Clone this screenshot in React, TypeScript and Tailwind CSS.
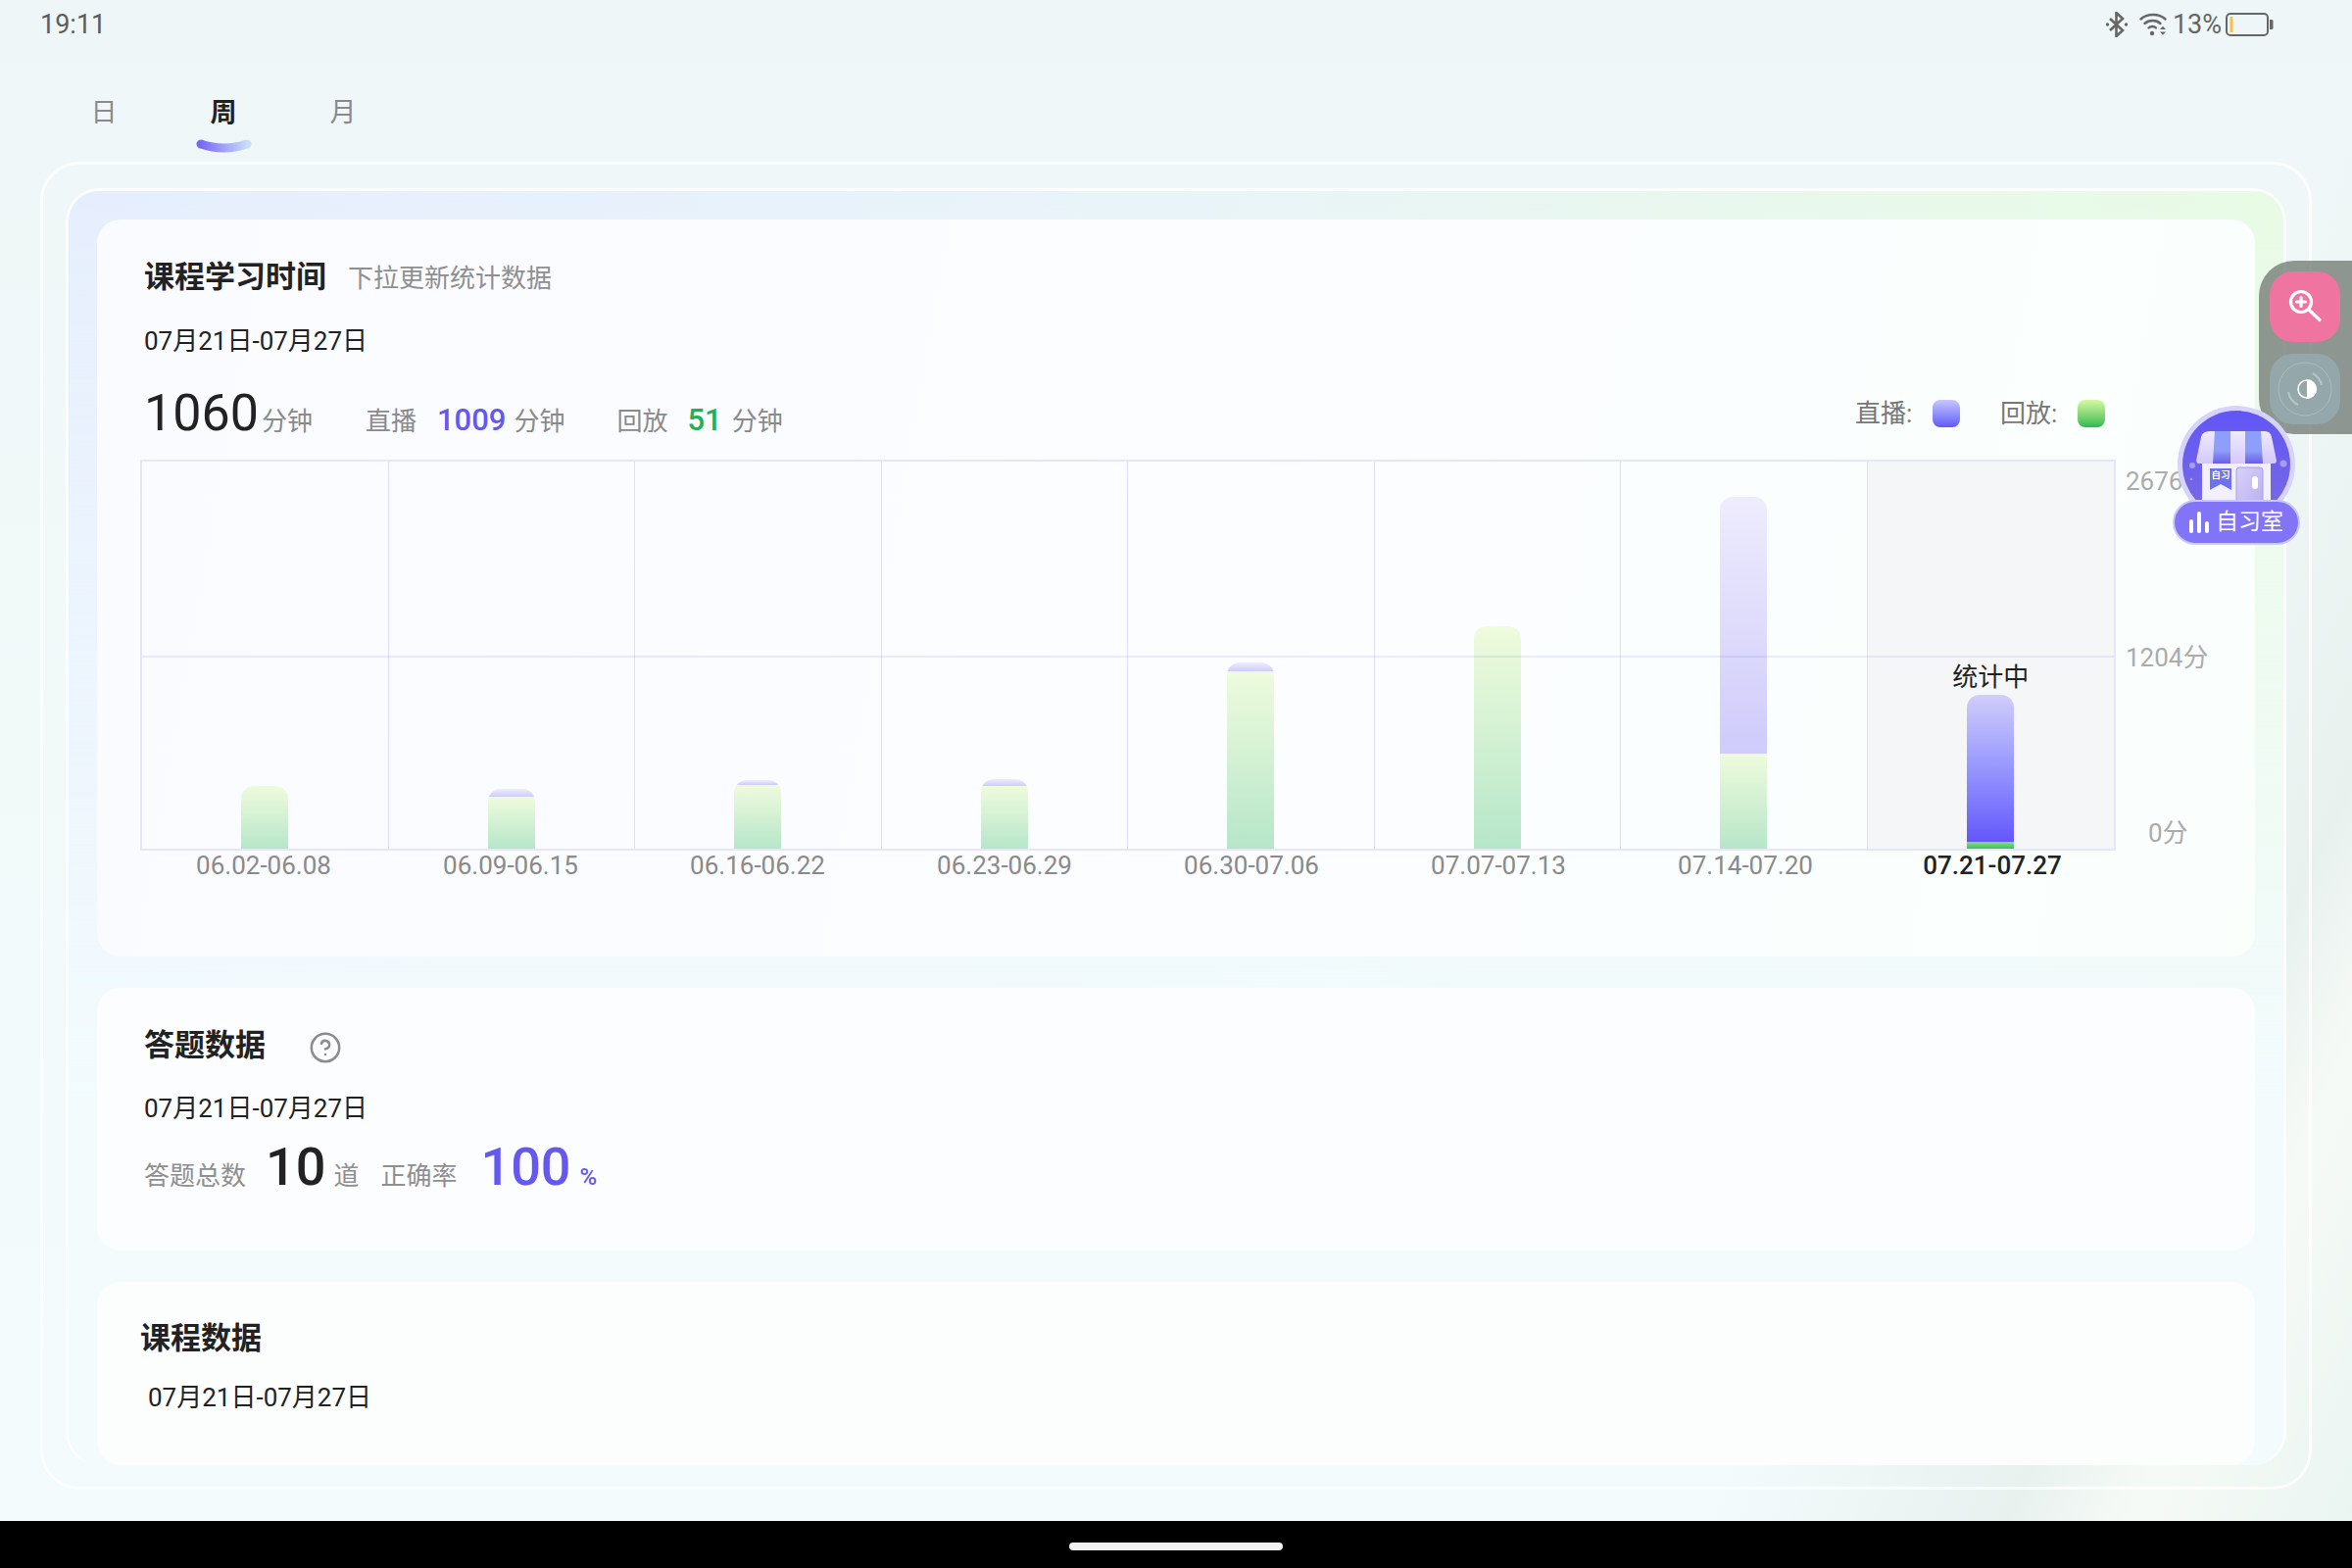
import { CircleHelp } from "lucide-react";

const weeks = [
  { label: "06.02-06.08", live: 0, replay: 64 },
  { label: "06.09-06.15", live: 8, replay: 53 },
  { label: "06.16-06.22", live: 5, replay: 65 },
  { label: "06.23-06.29", live: 7, replay: 64 },
  { label: "06.30-07.06", live: 9, replay: 181 },
  { label: "07.07-07.13", live: 0, replay: 227 },
  { label: "07.14-07.20", live: 262, replay: 97 },
];

function Bar({ live, replay }: { live: number; replay: number }) {
  return (
    <div className="w-[48px] flex flex-col overflow-hidden rounded-t-[13px]">
      {live > 0 && <div className="bg-gradient-to-b from-[#eeecfc] to-[#cfcbfb]" style={{ height: live }} />}
      <div className="bg-gradient-to-b from-[#effbdd] to-[#b6e6c9]" style={{ height: replay }} />
    </div>
  );
}

function BluetoothIcon() {
  return (
    <svg width="24" height="26" viewBox="0 0 24 26" fill="none" stroke="#666" strokeWidth="2.6">
      <path d="M5 7 L18 19 L11.5 25 V1 L18 7 L5 19" />
      <circle cx="2.5" cy="13" r="1.7" fill="#666" stroke="none" />
      <circle cx="21.5" cy="13" r="1.7" fill="#666" stroke="none" />
    </svg>
  );
}

function WifiIcon() {
  return (
    <svg width="28" height="24" viewBox="0 0 28 24" fill="none" stroke="#666" strokeWidth="2.4" strokeLinecap="round">
      <path d="M1.5 6.5 C8 0.5 20 0.5 26.5 6.5" />
      <path d="M5.5 11 C10 7 17 7 21.5 11" />
      <path d="M9.5 15.5 C11.5 13.5 15 13.5 17 15.5" />
      <circle cx="13" cy="21" r="2.2" fill="#666" stroke="none" />
      <path d="M21 17 L24 13.8 L27 17 Z" fill="#666" stroke="none" />
      <path d="M21 19.5 L24 22.7 L27 19.5 Z" fill="#666" stroke="none" />
    </svg>
  );
}

function BatteryIcon() {
  return (
    <svg width="49" height="24" viewBox="0 0 49 24" fill="none">
      <rect x="1" y="1" width="42" height="22" rx="4" stroke="#666" strokeWidth="2" />
      <rect x="4.5" y="4" width="3" height="16" fill="#f5c04a" />
      <path d="M45 7 H47 Q48.5 7 48.5 8.5 V15.5 Q48.5 17 47 17 H45 Z" fill="#666" />
    </svg>
  );
}

function TabMark() {
  return (
    <svg width="57" height="14" viewBox="0 0 57 14" fill="none" className="block">
      <defs>
        <linearGradient id="tabmark" x1="0" y1="0" x2="1" y2="0">
          <stop offset="0" stopColor="#7769f6" />
          <stop offset="1" stopColor="#c9dcf8" />
        </linearGradient>
      </defs>
      <path d="M5 5 Q28.5 13 52 5" stroke="url(#tabmark)" strokeWidth="9" strokeLinecap="round" />
    </svg>
  );
}

function DateLine({ className }: { className: string }) {
  return <div className={`text-[26px] leading-[30px] text-[#222] ${className}`}>07月21日-07月27日</div>;
}

function StoreBadge() {
  return (
    <svg width="120" height="100" viewBox="0 0 120 100" fill="none" className="block">
      <defs>
        <linearGradient id="disc" x1="0" y1="0" x2="0" y2="1">
          <stop offset="0" stopColor="#6156f6" />
          <stop offset="1" stopColor="#7a6be2" />
        </linearGradient>
        <linearGradient id="awnW" x1="0" y1="0" x2="0" y2="1">
          <stop offset="0" stopColor="#eeeafe" />
          <stop offset="1" stopColor="#d5c9fb" />
        </linearGradient>
        <linearGradient id="awnB" x1="0" y1="0" x2="0" y2="1">
          <stop offset="0" stopColor="#8d9ffb" />
          <stop offset="0.6" stopColor="#8d9ffb" />
          <stop offset="1" stopColor="#6a5ee8" />
        </linearGradient>
        <linearGradient id="doorG" x1="0" y1="0" x2="1" y2="1">
          <stop offset="0" stopColor="#d8d2f8" />
          <stop offset="1" stopColor="#b9aef0" />
        </linearGradient>
        <clipPath id="badge-clip">
          <rect x="0" y="0" width="120" height="100" />
        </clipPath>
      </defs>
      <g clipPath="url(#badge-clip)">
        <circle cx="60" cy="60" r="60" fill="#d7d3fc" />
        <circle cx="60" cy="60" r="55" fill="url(#disc)" />
        <circle cx="15" cy="61" r="3" fill="#a79df5" />
        <circle cx="108" cy="59" r="3.5" fill="#a79df5" />
        <circle cx="14" cy="75" r="1.2" fill="#a79df5" />
        <rect x="25" y="55" width="70" height="50" fill="#f3f0fe" />
        <path d="M33 26 H89 Q95 26 96 32 L101 56 Q101 59 98 59 H22 Q19 59 19 56 L24 32 Q25 26 33 26 Z" fill="url(#awnW)" />
        <path d="M38 26 H54 V59 H36 Z" fill="url(#awnB)" />
        <path d="M69 26 H85 L87 59 H69 Z" fill="url(#awnB)" />
        <path d="M33 64 H55 V86 L44 80 L33 86 Z" fill="#6d73f0" />
        <text x="44" y="74" textAnchor="middle" fontSize="9.5" fontWeight="700" fill="#fff">自习</text>
        <rect x="60" y="63" width="27" height="40" rx="3" fill="url(#doorG)" stroke="#a79cec" />
        <rect x="76" y="72" width="6" height="13" rx="3" fill="#fff" />
      </g>
    </svg>
  );
}

export default function App() {
  return (
    <div className="w-[2400px] h-[1600px] flex flex-col relative overflow-hidden font-[Roboto,'Noto_Sans_CJK_SC',sans-serif] bg-[linear-gradient(115deg,transparent_78%,#e8f1ee_88%,#f6faf6_92%,#e9f4f1_100%),linear-gradient(180deg,#eef6f7_0%,#f2f9f9_45%,#f3fbfd_100%)]">
      <div className="h-[50px] shrink-0 flex items-center justify-between pl-[41px] pr-[80px] text-[#5c5c5c]">
        <span className="text-[27px] leading-none">19:11</span>
        <div className="flex items-center">
          <BluetoothIcon />
          <div className="w-[11px]" />
          <WifiIcon />
          <span className="text-[27px] leading-none ml-[6px] mr-[4px] text-[#666]">13%</span>
          <BatteryIcon />
        </div>
      </div>

      <div className="shrink-0 flex pl-[45px] h-[115px]">
        <div className="w-[122px] text-center text-[27px] leading-[36px] mt-[47px] text-[#8a8a8a]">日</div>
        <div className="w-[122px] flex flex-col items-center mt-[47px]">
          <span className="text-[27px] leading-[36px] font-bold text-[#222]">周</span>
          <div className="mt-[9px]">
            <TabMark />
          </div>
        </div>
        <div className="w-[122px] text-center text-[27px] leading-[36px] mt-[47px] text-[#8a8a8a]">月</div>
      </div>

      <div className="flex-1 min-h-0 mx-[41px] mb-[32px] flex flex-col border-[3px] border-white/80 rounded-[40px] px-[23px] pt-[24px] pb-[22px]">
        <div className="flex-1 min-h-0 flex flex-col gap-[32px] overflow-hidden border-[3px] border-b-0 border-white/80 rounded-[34px] px-[29px] pt-[29px] bg-[linear-gradient(180deg,transparent_0%,#f3fbfd_72%),linear-gradient(90deg,#e6eefd_0%,#e9f4f8_50%,#e8fbe4_100%)]">
          <section className="h-[752px] shrink-0 rounded-[24px] bg-[linear-gradient(100deg,#f9fbff_0%,#fbfdff_60%,#fafffc_100%)] pl-[44px] pt-[41px]">
            <div className="pl-[4px] flex items-end">
              <h2 className="text-[31px] leading-[36px] font-bold text-[#222]">课程学习时间</h2>
              <span className="text-[26px] leading-[34px] text-[#8f8f8f] ml-[22px]">下拉更新统计数据</span>
            </div>
            <DateLine className="pl-[4px] mt-[32px]" />
            <div className="w-[2016px] pl-[4px] mt-[29px] h-[60px] flex items-center text-[26px] text-[#8a8a8a]">
              <div className="flex items-baseline">
                <span className="text-[52px] leading-[60px] text-[#222]">1060</span>
                <span className="ml-[3px]">分钟</span>
                <span className="ml-[54px]">直播</span>
                <span className="ml-[21px] text-[31px] font-medium text-[#6558f0]">1009</span>
                <span className="ml-[8px]">分钟</span>
                <span className="ml-[53px]">回放</span>
                <span className="ml-[20px] text-[31px] font-medium text-[#22b150]">51</span>
                <span className="ml-[10px]">分钟</span>
              </div>
              <div className="ml-auto mr-[11px] flex items-center text-[#777]">
                <span className="w-[79px]">直播:</span>
                <span className="w-[28px] h-[28px] rounded-[8px] bg-gradient-to-b from-[#cbc5fb] to-[#6456f8]" />
                <span className="w-[79px] ml-[41px]">回放:</span>
                <span className="w-[28px] h-[28px] rounded-[8px] bg-gradient-to-b from-[#d5f8a2] to-[#22b950]" />
              </div>
            </div>
            <div className="mt-[17px] flex">
              <div className="relative w-[2016px] h-[399px] grid grid-cols-8 border-2 border-[#e6e6fa]">
                {weeks.map((w) => (
                  <div key={w.label} className="border-r-[1.5px] border-[#dedefb] flex flex-col justify-end items-center">
                    <Bar live={w.live} replay={w.replay} />
                  </div>
                ))}
                <div className="bg-[#f5f6f7] flex flex-col justify-end items-center">
                  <span className="text-[26px] leading-[30px] text-[#222] mb-[3px]">统计中</span>
                  <div className="w-[48px] flex flex-col overflow-hidden rounded-t-[13px]">
                    <div className="h-[150px] bg-gradient-to-b from-[#d2cdfa] to-[#6655fb]" />
                    <div className="h-[7px] bg-gradient-to-b from-[#86e08a] to-[#3bbc5e]" />
                  </div>
                </div>
                <div className="absolute left-0 right-0 top-[198px] h-[2px] bg-[#5050e0]/10" />
              </div>
              <div className="ml-[10px] w-[90px] flex flex-col pt-[7px] gap-[149.5px] text-[26px] leading-[30px] text-[#ababab]">
                <span>2676分</span>
                <span>1204分</span>
                <span className="pl-[23px]">0分</span>
              </div>
            </div>
            <div className="w-[2016px] grid grid-cols-8 mt-0 text-[26px] leading-[30px] text-center text-[#8a8a8a]">
              {weeks.map((w) => (
                <span key={w.label}>{w.label}</span>
              ))}
              <span className="font-medium text-[#222]">07.21-07.27</span>
            </div>
          </section>

          <section className="h-[268px] shrink-0 rounded-[24px] bg-[#fbfdff] pl-[48px] pt-[41px]">
            <div className="flex items-center h-[36px]">
              <h2 className="text-[31px] leading-[36px] font-bold text-[#222]">答题数据</h2>
              <CircleHelp size={34} strokeWidth={1.8} color="#8c8c8c" className="ml-[44px] mt-[4px]" />
            </div>
            <DateLine className="mt-[31px]" />
            <div className="mt-[15px] flex items-baseline text-[26px] text-[#8f8f8f]">
              <span>答题总数</span>
              <span className="ml-[20px] text-[54px] leading-[60px] font-medium text-[#222]">10</span>
              <span className="ml-[8px]">道</span>
              <span className="ml-[22px]">正确率</span>
              <span className="ml-[24px] text-[54px] leading-[60px] font-medium text-[#6558f0]">100</span>
              <span className="ml-[9px] text-[24px] font-medium text-[#6558f0]">%</span>
            </div>
          </section>

          <section className="flex-1 rounded-[24px] bg-[#fcfefe] pt-[40px]">
            <h2 className="pl-[44px] text-[31px] leading-[36px] font-bold text-[#222]">课程数据</h2>
            <DateLine className="pl-[52px] mt-[27px]" />
          </section>
        </div>
      </div>

      <div className="h-[48px] shrink-0 bg-black flex items-center justify-center">
        <div className="w-[218px] h-[8px] mt-[3px] rounded-full bg-[#f2f2f2]" />
      </div>

      <div className="absolute left-[2305px] top-[266px] w-[95px] h-[177px] rounded-l-[36px] bg-[#6e7670]/75 flex flex-col gap-[12px] pl-[11px] pt-[11px]">
        <div className="w-[72px] h-[72px] rounded-[24px] bg-[#ef74a0] flex items-center justify-center">
          <svg width="40" height="40" viewBox="0 0 40 40" fill="none" stroke="#fff" strokeWidth="3.2" strokeLinecap="round">
            <circle cx="16" cy="15" r="10.5" />
            <path d="M16 10.5 V19.5 M11.5 15 H20.5" />
            <path d="M24 23 L35 33.5" />
          </svg>
        </div>
        <div className="w-[72px] h-[72px] rounded-[24px] bg-[#94a8ab] flex items-center justify-center">
          <svg width="60" height="60" viewBox="0 0 60 60" fill="none">
            <circle cx="30" cy="30" r="27" stroke="#a9bbbd" strokeWidth="1" />
            <path d="M38 14 A18 18 0 0 1 47 26" stroke="#b6c6c8" strokeWidth="2" />
            <path d="M13 33 A18 18 0 0 0 23 46" stroke="#b6c6c8" strokeWidth="2" />
            <circle cx="32" cy="30" r="9" stroke="#fff" strokeWidth="1.6" />
            <path d="M32 20 A10 10 0 0 1 32 40 Z" fill="#fff" />
          </svg>
        </div>
      </div>

      <div className="absolute left-[2217px] top-[414px] w-[130px] flex flex-col items-center">
        <StoreBadge />
        <div className="w-[130px] h-[46px] -mt-[4px] rounded-full bg-[#8274f6] border-2 border-[#cbc6fb] flex items-center justify-center text-white text-[23px]">
          <svg width="20" height="22" viewBox="0 0 20 22" fill="#fff" className="mr-[7px]">
            <rect x="0" y="8" width="4" height="14" rx="2" />
            <rect x="8" y="0" width="4" height="22" rx="2" />
            <rect x="16" y="10" width="4" height="12" rx="2" />
          </svg>
          <span className="tracking-[0px]">自习室</span>
        </div>
      </div>
    </div>
  );
}
